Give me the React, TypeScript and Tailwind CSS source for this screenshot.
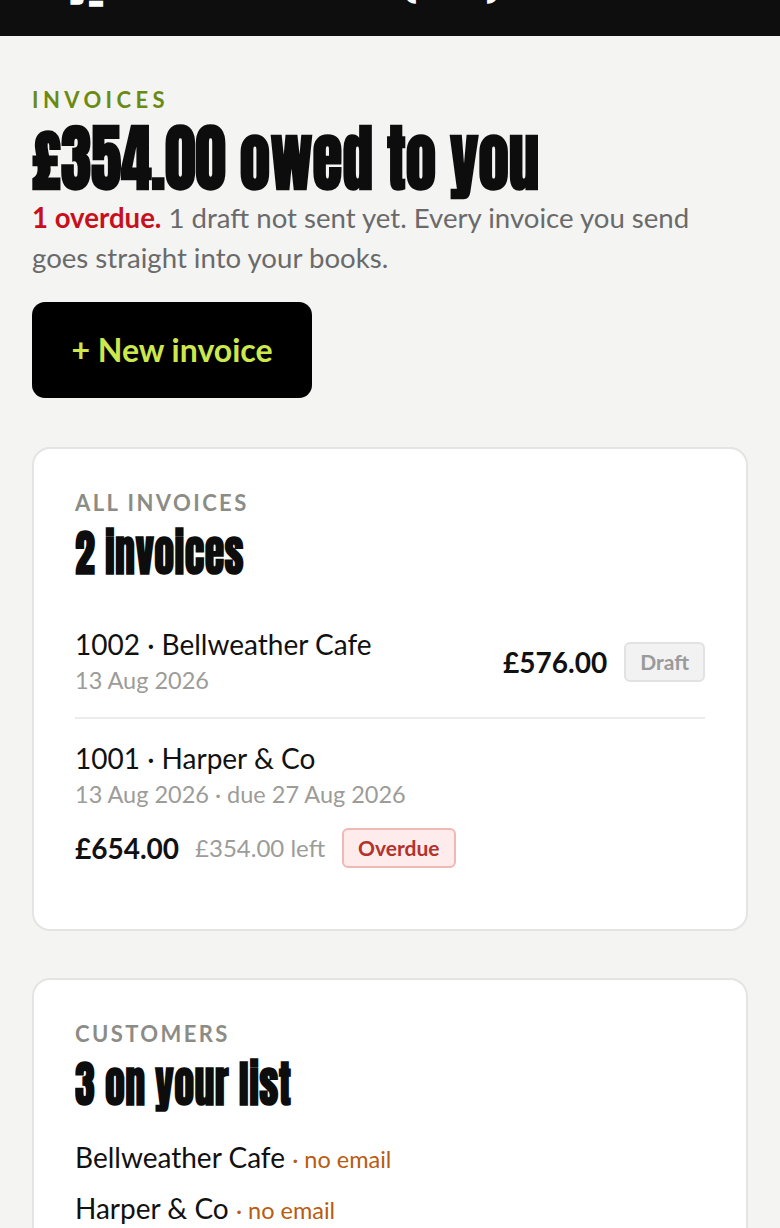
const display = "font-['Anton','Liberation_Sans_Narrow','DejaVu_Sans_Condensed',sans-serif] font-bold";

function Eyebrow({ children, tone, wide }: { children: React.ReactNode; tone: string; wide?: boolean }) {
  return (
    <div className={`text-[22px] leading-[24px] font-bold uppercase ${wide ? "tracking-[0.2em]" : "tracking-[0.11em]"} ${tone}`}>
      {children}
    </div>
  );
}

function Badge({ children, kind }: { children: React.ReactNode; kind: "draft" | "overdue" }) {
  const cls =
    kind === "draft"
      ? "bg-[#f2f2f2] border-[#e2e2e2] text-[#9a9a9a]"
      : "bg-[#fdeceb] border-[#f1b9b3] text-[#b3322b]";
  return (
    <span className={`inline-flex h-[40px] items-center rounded-[6px] border-2 px-[14px] text-[21px] font-bold ${cls}`}>
      {children}
    </span>
  );
}

export default function App() {
  return (
    <div className="min-h-[1228px] bg-[#f4f4f3] font-['Lato','Noto_Sans',sans-serif] text-[#111]">
      <header className="h-[36px] overflow-hidden bg-[#0e0e0e]">
        <div className={`-mt-[40px] pl-[40px] text-[40px] leading-[44px] text-white ${display}`}>
          my_business·invoices (beta)
        </div>
      </header>

      <main className="px-[32px] pt-[52px] pb-[40px]">
        <Eyebrow tone="text-[#6b8a12]" wide>
          Invoices
        </Eyebrow>
        <h1 className={`mt-[14px] origin-left scale-y-[1.2] text-[61px] leading-[64px] text-[#0d0d0d] ${display}`}>
          £354.00 owed to you
        </h1>
        <p className="mt-[8px] text-[27.6px] leading-[40px] text-[#6a6a6a]">
          <span className="font-bold text-[#c8101c]">1 overdue.</span> 1 draft not sent yet. Every invoice you send goes
          straight into your books.
        </p>

        <button className="mt-[24px] h-[96px] w-[280px] rounded-[13px] bg-black text-[32px] font-bold text-[#cde84a]">
          + New invoice
        </button>

        <section className="mt-[49px] rounded-[18px] border-2 border-[#e4e4e2] bg-white px-[41px] pt-[42px] pb-[60px]">
          <Eyebrow tone="text-[#8c8c86]">All invoices</Eyebrow>
          <h2 className={`mt-[14px] origin-left scale-y-[1.25] text-[40px] leading-[48px] tracking-[0.01em] text-[#0d0d0d] ${display}`}>
            2 invoices
          </h2>

          <div className="mt-[49px] flex items-center justify-between border-b-2 border-[#ececec] pb-[19px]">
            <div>
              <div className="text-[28px] leading-[36px]">1002 · Bellweather Cafe</div>
              <div className="text-[23.5px] leading-[36px] text-[#9c9c98]">13 Aug 2026</div>
            </div>
            <div className="flex items-center gap-[17px]">
              <span className="text-[28px] font-bold">£576.00</span>
              <Badge kind="draft">Draft</Badge>
            </div>
          </div>

          <div className="pt-[21px]">
            <div className="text-[28px] leading-[36px]">1001 · Harper &amp; Co</div>
            <div className="text-[23.5px] leading-[36px] text-[#9c9c98]">13 Aug 2026 · due 27 Aug 2026</div>
            <div className="mt-[15px] flex items-center">
              <span className="text-[28px] font-bold">£654.00</span>
              <span className="ml-[16px] text-[24px] text-[#9c9c98]">£354.00 left</span>
              <span className="ml-[17px] flex">
                <Badge kind="overdue">Overdue</Badge>
              </span>
            </div>
          </div>
        </section>

        <section className="mt-[47px] rounded-[18px] border-2 border-[#e4e4e2] bg-white px-[41px] pt-[42px] pb-[52px]">
          <Eyebrow tone="text-[#8c8c86]">Customers</Eyebrow>
          <h2 className={`mt-[14px] origin-left scale-y-[1.25] text-[40px] leading-[48px] tracking-[0.01em] text-[#0d0d0d] ${display}`}>
            3 on your list
          </h2>
          <ul className="mt-[31px] flex flex-col gap-[13px] text-[28px] leading-[36px]">
            <li>
              Bellweather Cafe <span className="text-[23.5px] text-[#b85c10]">· no email</span>
            </li>
            <li>
              Harper &amp; Co <span className="text-[23.5px] text-[#b85c10]">· no email</span>
            </li>
            <li>
              Northgate Studio <span className="text-[23.5px] text-[#b85c10]">· no email</span>
            </li>
          </ul>
        </section>
      </main>
    </div>
  );
}
